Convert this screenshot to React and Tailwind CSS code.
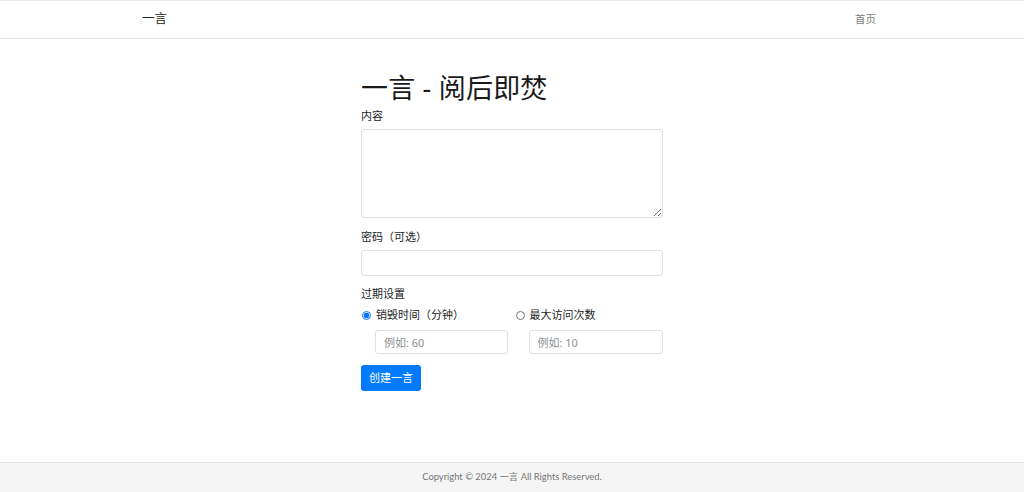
import React from "react";

const font = { fontFamily: '"Segoe UI", "Noto Sans", "Noto Sans CJK SC", sans-serif' };

export default function App() {
  return (
    <div className="min-h-screen flex flex-col bg-white text-[#212529]" style={font}>
      <header className="border-t border-b border-[#e9e9e9] h-[39px] flex items-center">
        <div className="w-[734px] ml-[142px] flex items-center justify-between">
          <span className="text-[12.5px] leading-none text-[#222]">一言</span>
          <span className="text-[10.5px] leading-none text-[#808080]">首页</span>
        </div>
      </header>

      <main className="flex-1">
        <div className="w-[302px] mx-auto pt-[33px]">
          <h1 className="text-[27px] leading-[32px] font-normal text-[#1a1a1a] tracking-[0.2px]">一言 - 阅后即焚</h1>
          <label className="block mt-[5px] text-[11px] leading-[14px]">内容</label>
          <textarea className="block mt-[6px] w-full h-[89px] border border-[#dcdfe3] rounded-[3px] resize-y outline-none" />
          <label className="block mt-[12px] text-[11px] leading-[14px]">密码（可选）</label>
          <input type="password" className="block mt-[6px] w-full h-[26px] border border-[#dcdfe3] rounded-[3px] outline-none" />
          <label className="block mt-[11px] text-[11px] leading-[14px]">过期设置</label>
          <div className="grid grid-cols-2 gap-x-[7px] mt-[7px]">
            <div>
              <label className="flex items-center h-[14px] text-[11px] leading-[14px] text-[#1d1d1d]">
                <input type="radio" name="exp" defaultChecked className="w-[9px] h-[9px] m-0 ml-[1px] mr-[5px]" />
                销毁时间（分钟）
              </label>
              <input placeholder="例如: 60" className="block mt-[8px] ml-[14px] w-[133px] h-[24px] px-[8px] text-[11px] border border-[#dcdfe3] rounded-[3px] placeholder:text-[#8a8f94] outline-none" />
            </div>
            <div>
              <label className="flex items-center h-[14px] text-[11px] leading-[14px] text-[#1d1d1d]">
                <input type="radio" name="exp" className="w-[9px] h-[9px] m-0 ml-[0px] mr-[5px]" />
                最大访问次数
              </label>
              <input placeholder="例如: 10" className="block mt-[8px] ml-[13px] w-[134px] h-[24px] px-[8px] text-[11px] border border-[#dcdfe3] rounded-[3px] placeholder:text-[#8a8f94] outline-none" />
            </div>
          </div>
          <button className="mt-[11px] w-[60px] h-[26px] bg-[#007bff] text-white text-[11px] rounded-[3px]">创建一言</button>
        </div>
      </main>

      <footer className="h-[30px] border-t border-[#e3e3e3] bg-[#f5f5f5] flex items-center justify-center">
        <span className="text-[9.4px] text-[#757575]" style={{ fontFamily: 'Lato, "Noto Sans CJK SC", sans-serif' }}>Copyright © 2024 一言 All Rights Reserved.</span>
      </footer>
    </div>
  );
}
